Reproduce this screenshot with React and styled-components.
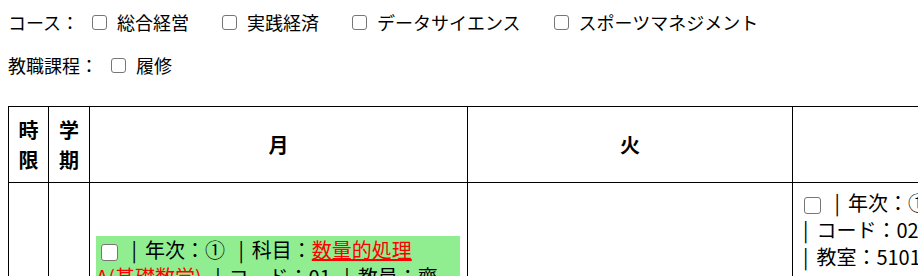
import { createGlobalStyle } from "styled-components"
import styled from "styled-components"

const COURSES = ["総合経営", "実践経済", "データサイエンス", "スポーツマネジメント"]
const DAYS = ["月", "火", "水", "木", "金"]
const COL_WIDTHS = [40, 41, 378, 325, 345, 345, 345]

const SLOT = {
  月: [
    {
      year: "①",
      subject: "数量的処理A(基礎数学)",
      code: "01",
      teacher: "齋藤正之",
      room: "5102",
      highlight: true,
      top: 47,
    },
  ],
  火: [],
  水: [
    {
      year: "①",
      subject: "経営学入門",
      code: "02",
      teacher: "佐藤健一",
      room: "5101",
    },
  ],
  木: [],
  金: [],
}

export default function App() {
  return (
    <>
      <GlobalStyle />
      <Page>
        <Line>
          <Title>コース：</Title>
          <Options>
            {COURSES.map((course) => (
              <Option key={course}>
                <Check type="checkbox" $size={15} />
                {course}
              </Option>
            ))}
          </Options>
        </Line>
        <Line>
          <Title>教職課程：</Title>
          <Options>
            <Option>
              <Check type="checkbox" $size={15} />
              履修
            </Option>
          </Options>
        </Line>
        <Table>
          <colgroup>
            {COL_WIDTHS.map((w, i) => (
              <col key={i} style={{ width: w }} />
            ))}
          </colgroup>
          <thead>
            <tr>
              <Th>時限</Th>
              <Th>学期</Th>
              {DAYS.map((day) => (
                <Th key={day}>{day}</Th>
              ))}
            </tr>
          </thead>
          <tbody>
            <tr>
              <Td />
              <Td />
              {DAYS.map((day) => (
                <Td key={day}>
                  {SLOT[day].map((entry) => (
                    <Entry key={entry.code} $highlight={entry.highlight} $top={entry.top}>
                      <Check type="checkbox" $size={17} $inline />{" "}
                      <Field>
                        <Bar>|</Bar>年次：{entry.year}
                      </Field>{" "}
                      <Field $wrap>
                        <Bar>|</Bar>科目：<Subject href="#">{entry.subject}</Subject>
                      </Field>{" "}
                      <Field>
                        <Bar>|</Bar>コード：{entry.code}
                      </Field>{" "}
                      <Field $wrap>
                        <Bar>|</Bar>教員：{entry.teacher}
                      </Field>{" "}
                      <Field>
                        <Bar>|</Bar>教室：{entry.room}
                      </Field>
                    </Entry>
                  ))}
                </Td>
              ))}
            </tr>
          </tbody>
        </Table>
      </Page>
    </>
  )
}

const GlobalStyle = createGlobalStyle`
  html, body {
    margin: 0;
    overflow: hidden;
    background: #fff;
  }
  body {
    font-family: "Noto Sans CJK JP", "Noto Sans", sans-serif;
    color: #000;
  }
`

const Page = styled.div`
  padding: 7px 8px 0 8px;
  display: flex;
  flex-direction: column;
  gap: 13px;
  font-size: 18px;
`

const Line = styled.div`
  display: flex;
  align-items: center;
  height: 30px;
  white-space: nowrap;
`

const Title = styled.span``

const Options = styled.div`
  display: flex;
  align-items: center;
  gap: 33px;
  margin-left: 13px;
`

const Option = styled.label`
  display: inline-flex;
  align-items: center;
  gap: 10px;
`

const Check = styled.input`
  appearance: none;
  box-sizing: border-box;
  width: ${(p) => p.$size}px;
  height: ${(p) => p.$size}px;
  margin: ${(p) => (p.$inline ? "0 0 0 5px" : "0")};
  border: ${(p) => (p.$size > 16 ? "1.3px" : "1.2px")} solid #767676;
  border-radius: 3px;
  background: #fff;
  vertical-align: ${(p) => (p.$inline ? "-3px" : "middle")};
  flex-shrink: 0;
`

const Table = styled.table`
  margin-top: 13px;
  border-collapse: collapse;
  table-layout: fixed;
  width: 1819px;
`

const Th = styled.th`
  border: 1px solid #000;
  padding: 8px 6px 7px;
  font-size: 20px;
  font-weight: bold;
  line-height: 30px;
  text-align: center;
  vertical-align: middle;
`

const Td = styled.td`
  border: 1px solid #000;
  padding: 6px;
  height: 200px;
  font-size: 20px;
  line-height: 27px;
  vertical-align: top;
`

const Entry = styled.div`
  margin-top: ${(p) => p.$top || 0}px;
  margin-right: ${(p) => (p.$highlight ? "1px" : "0")};
  padding-right: ${(p) => (p.$highlight ? "15px" : "0")};
  background: ${(p) => (p.$highlight ? "#90ee90" : "transparent")};
  word-spacing: 5px;
`

const Field = styled.span`
  white-space: ${(p) => (p.$wrap ? "normal" : "nowrap")};
`

const Bar = styled.span`
  margin: 0 8px 0 4px;
  color: #000;
`

const Subject = styled.a`
  color: red;
  text-decoration: underline;
`
